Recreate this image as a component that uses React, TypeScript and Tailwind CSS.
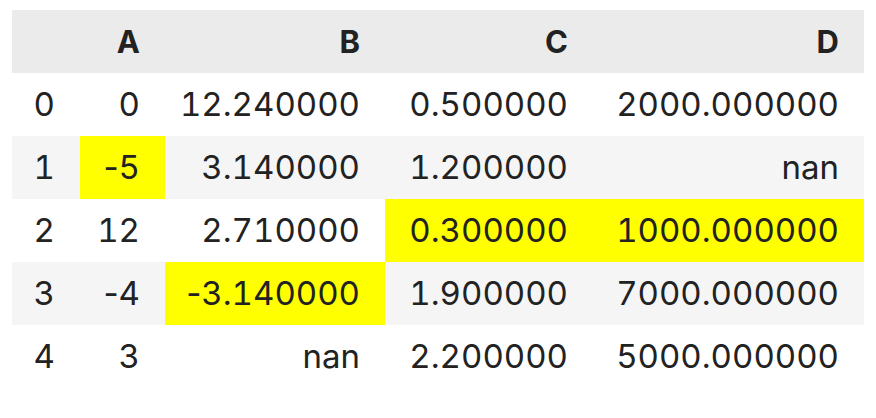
const columns = ['A', 'B', 'C', 'D'];

type Cell = { v: string; hl?: boolean };

const rows: { idx: string; cells: Cell[] }[] = [
  { idx: '0', cells: [{ v: '0' }, { v: '12.240000' }, { v: '0.500000' }, { v: '2000.000000' }] },
  { idx: '1', cells: [{ v: '-5', hl: true }, { v: '3.140000' }, { v: '1.200000' }, { v: 'nan' }] },
  { idx: '2', cells: [{ v: '12' }, { v: '2.710000' }, { v: '0.300000', hl: true }, { v: '1000.000000', hl: true }] },
  { idx: '3', cells: [{ v: '-4' }, { v: '-3.140000', hl: true }, { v: '1.900000' }, { v: '7000.000000' }] },
  { idx: '4', cells: [{ v: '3' }, { v: 'nan' }, { v: '2.200000' }, { v: '5000.000000' }] },
];

const widths = ['w-[68px]', 'w-[85px]', 'w-[220px]', 'w-[208px]', 'w-[271px]'];

// keep the minus sign proportional, digits tabular
function Num({ v }: { v: string }) {
  if (v.startsWith('-')) {
    return (
      <>
        <span className="normal-nums">-</span>
        {v.slice(1)}
      </>
    );
  }
  return <>{v}</>;
}

export default function App() {
  return (
    <div className="w-[876px] h-[418px] bg-white pt-[10px] pl-[12px] font-['Inter',sans-serif] text-[#222]">
      <table className="border-collapse leading-none tabular-nums">
        <thead>
          <tr className="bg-[#ebebeb] h-[63px] text-[31px]">
            <th className={`${widths[0]} p-0`} />
            {columns.map((c, i) => (
              <th key={c} className={`${widths[i + 1]} pr-[25px] text-right font-bold`}>
                {c}
              </th>
            ))}
          </tr>
        </thead>
        <tbody className="text-[33px]">
          {rows.map((r, ri) => (
            <tr key={r.idx} className={`h-[63px] ${ri % 2 === 1 ? 'bg-[#f5f5f5]' : 'bg-white'}`}>
              <td className="pr-[25px] text-right">{r.idx}</td>
              {r.cells.map((c, ci) => (
                <td key={ci} className={`pr-[25px] text-right ${c.hl ? 'bg-[#ffff00]' : ''}`}>
                  <Num v={c.v} />
                </td>
              ))}
            </tr>
          ))}
        </tbody>
      </table>
    </div>
  );
}
